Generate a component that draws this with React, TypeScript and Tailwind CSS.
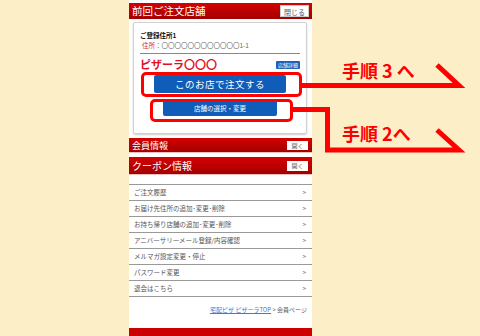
import React from "react";

const rows = [
  "ご注文履歴",
  "お届け先住所の追加･変更･削除",
  "お持ち帰り店舗の追加･変更･削除",
  "アニバーサリーメール登録/内容確認",
  "メルマガ設定変更・停止",
  "パスワード変更",
  "退会はこちら",
];

export default function App() {
  return (
    <div
      className="relative w-[480px] h-[336px] overflow-hidden bg-[#fcefc8] flex"
      style={{ fontFamily: '"Noto Sans CJK JP", "Noto Sans", sans-serif' }}
    >
      <div className="ml-[129px] w-[183px] h-[336px] bg-white flex flex-col">
        {/* header */}
        <div className="shrink-0 mt-[3px] h-[16px] bg-gradient-to-b from-[#d60000] to-[#a30000] flex items-center justify-between pl-[3px] pr-[3px]">
          <span className="text-[10.5px] leading-none text-white">前回ご注文店舗</span>
          <span className="h-[12px] px-[3px] bg-white text-[7px] leading-[12px] text-[#555] border border-[#ccc]">閉じる</span>
        </div>

        {/* card */}
        <div className="shrink-0 ml-[4px] mr-[5px] mt-[3px] h-[112px] border border-[#d0d0d0] rounded-[2px] shadow-[0_1px_2px_rgba(0,0,0,0.2)] flex flex-col px-[6px]">
          <div className="mt-[8px] text-[6.5px] leading-[9px] font-bold text-[#111]">ご登録住所1</div>
          <div className="mt-[1px] ml-[2px] text-[6.5px] leading-[9px] text-[#666]">
            <span className="text-[#c33]">住所</span>：〇〇〇〇〇〇〇〇〇〇〇〇1-1
          </div>
          <div className="mt-[3px] h-px bg-[#888]" />
          <div className="mt-[4px] flex items-center justify-between">
            <span className="text-[11px] leading-[13px] font-bold text-[#e0101e]">ピザーラ〇〇〇</span>
            <span className="h-[8px] px-[2px] bg-[#1a62b8] rounded-[1px] text-[5px] leading-[8px] text-white">店舗詳細</span>
          </div>
          <div className="mt-[4px] mx-auto w-[132px] h-[18px] rounded-[2px] bg-[#0f5db9] text-white text-[9.5px] leading-[18px] text-center tracking-[0.5px]">
            このお店で注文する
          </div>
          <div className="mt-[7px] mx-auto w-[114px] h-[16px] rounded-[2px] bg-[#0f5db9] text-white text-[6.5px] leading-[16px] text-center">
            店舗の選択・変更
          </div>
        </div>

        {/* sections */}
        <div className="shrink-0 mt-[4px] h-[15px] bg-gradient-to-b from-[#d60000] to-[#a30000] flex items-center justify-between pl-[3px] pr-[4px] border-b border-[#f3c0c0]">
          <span className="text-[9px] leading-none text-white">会員情報</span>
          <span className="h-[9px] w-[21px] bg-white text-[6px] leading-[9px] text-[#555] text-center">開く</span>
        </div>
        <div className="shrink-0 mt-[4px] h-[18px] bg-gradient-to-b from-[#d60000] to-[#a30000] flex items-center justify-between pl-[3px] pr-[4px] border-b border-[#f3c0c0]">
          <span className="text-[10px] leading-none text-white">クーポン情報</span>
          <span className="h-[10px] w-[21px] bg-white text-[6px] leading-[10px] text-[#555] text-center">開く</span>
        </div>

        {/* list */}
        <div className="shrink-0 mt-[9px] border-t border-[#999]">
          {rows.map((r) => (
            <div key={r} className="h-[16px] border-b border-[#999] flex items-center justify-between pl-[5px] pr-[6px]">
              <span className="text-[6.5px] leading-none text-[#555]">{r}</span>
              <span className="text-[6.5px] leading-none text-[#666]">&gt;</span>
            </div>
          ))}
        </div>

        {/* breadcrumb */}
        <div className="shrink-0 mt-[8px] flex justify-end pr-[5px] text-[6px] leading-[9px]">
          <span className="text-[#3a7bd5] underline">宅配ピザ ピザーラTOP</span>
          <span className="text-[#555]">&nbsp;&gt; 会員ページ</span>
        </div>

        {/* footer */}
        <div className="shrink-0 mt-[14px] h-[40px] bg-[#cc0000] pl-[12px] pt-[3px]">
          <span className="text-[7px] leading-none text-white whitespace-nowrap">ご利用規約　お支払方法　ニュース　店舗検索</span>
        </div>
      </div>

      {/* annotation boxes */}
      <div className="absolute left-[141px] top-[72px] w-[161px] h-[25px] border-[3px] border-[#ff0000] rounded-[5px]" />
      <div className="absolute left-[150px] top-[99px] w-[143px] h-[23px] border-[3px] border-[#ff0000] rounded-[5px]" />

      <svg className="absolute left-0 top-0" width="480" height="336" viewBox="0 0 480 336">
        <polyline points="301,85.5 459,85.5 437,65" fill="none" stroke="#ff0000" strokeWidth="5" strokeLinejoin="miter" />
        <polyline points="292,109.5 327.5,109.5 327.5,150 459,150 437,130" fill="none" stroke="#ff0000" strokeWidth="5" strokeLinejoin="miter" />
      </svg>

      <div className="absolute left-[342px] top-[59px] text-[18px] leading-[22px] font-bold text-[#ff0000] whitespace-nowrap">手順 3 へ</div>
      <div className="absolute left-[342px] top-[122px] text-[18px] leading-[22px] font-bold text-[#ff0000] whitespace-nowrap">手順 2へ</div>
    </div>
  );
}
